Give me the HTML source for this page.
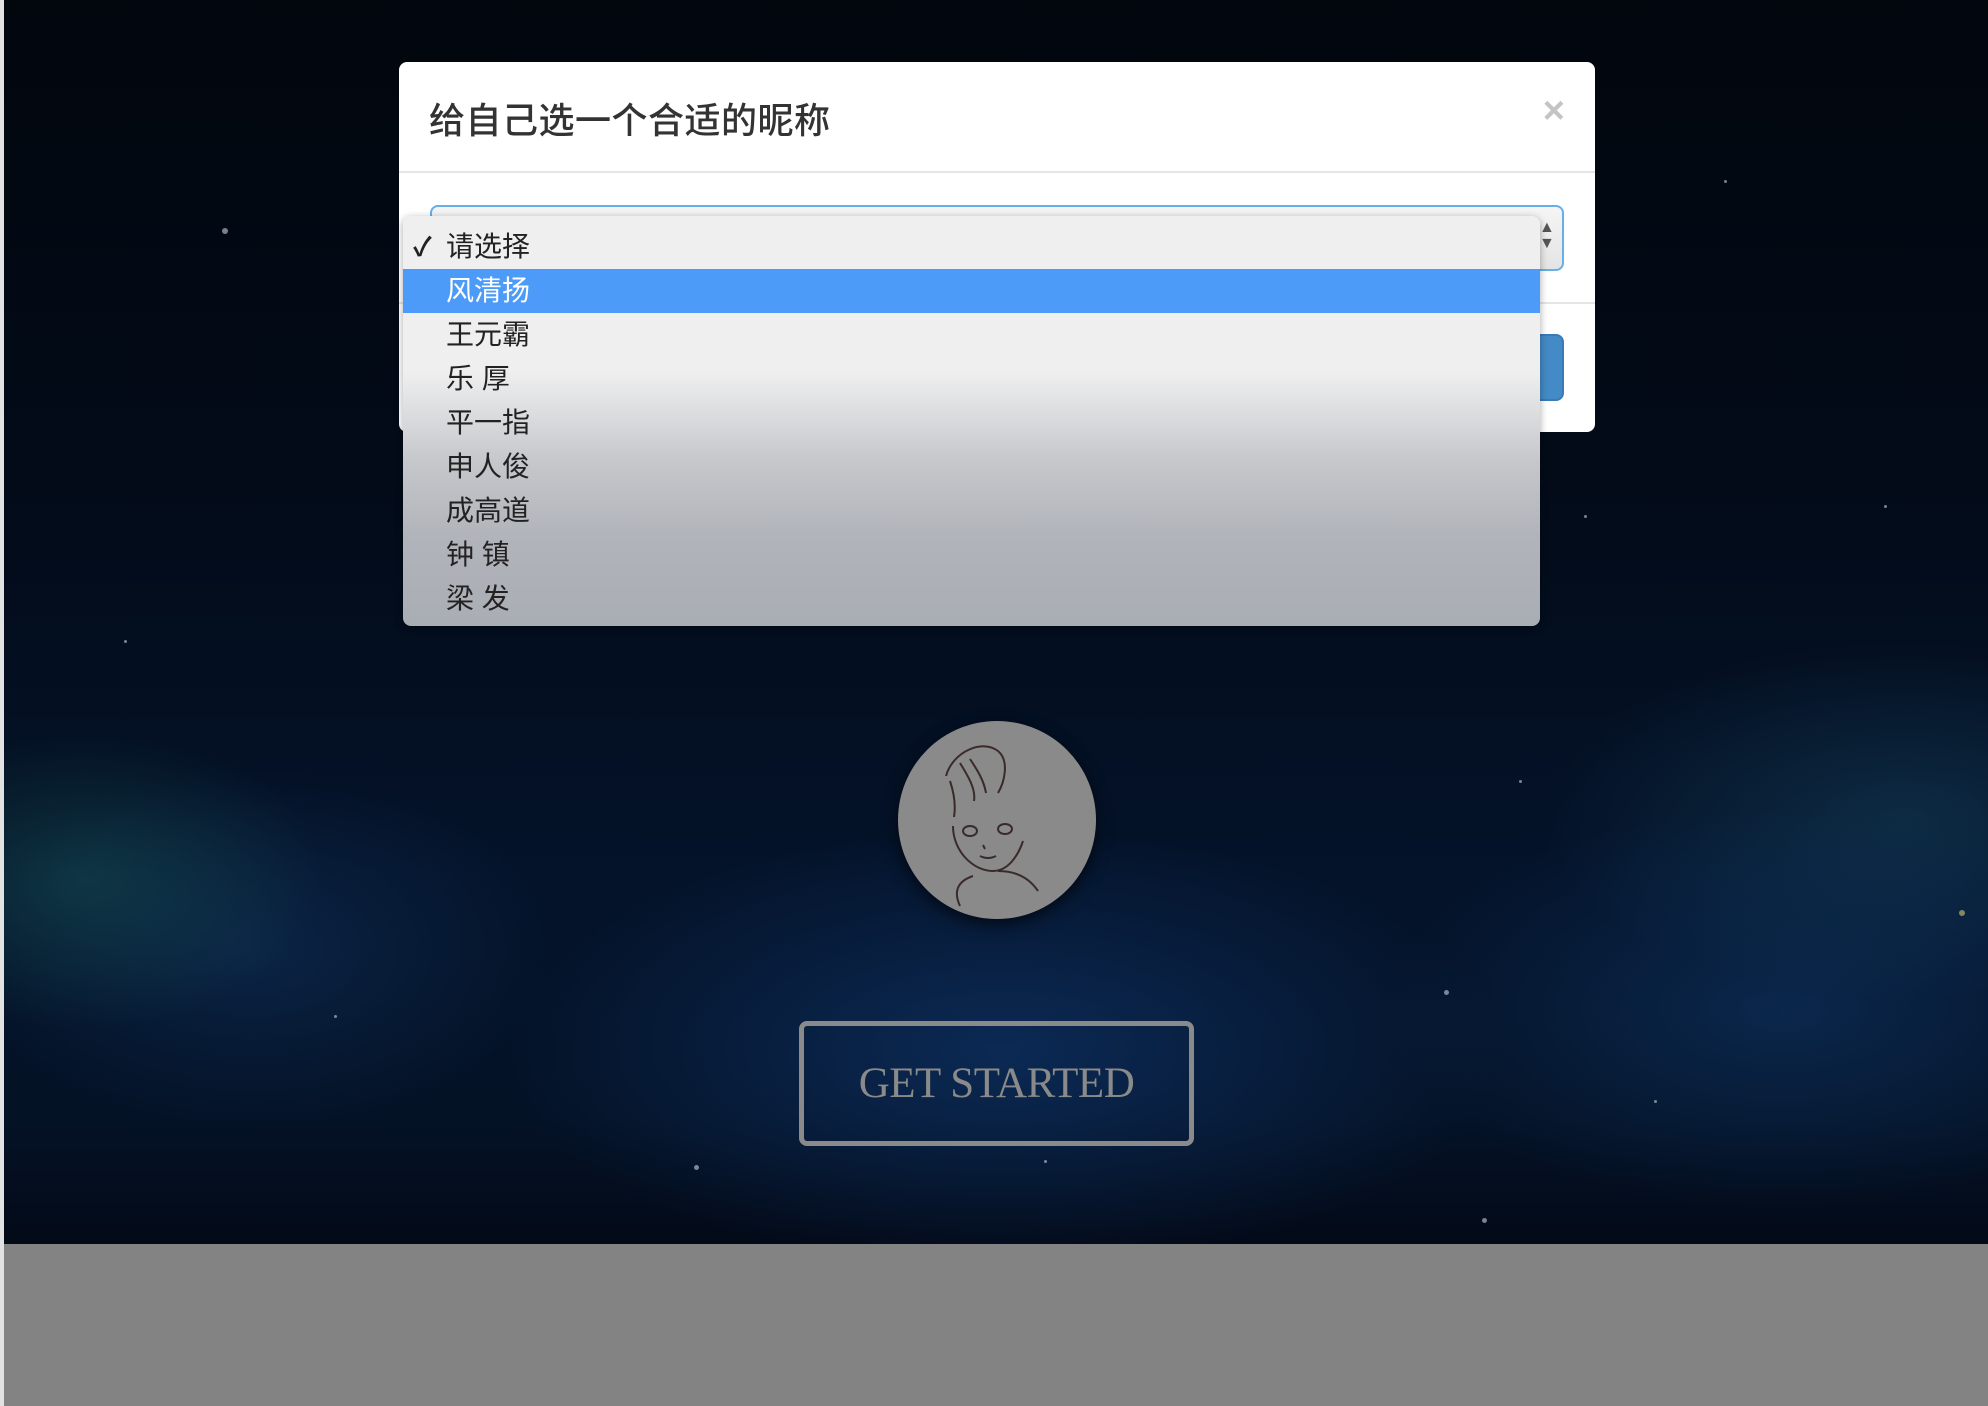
<!DOCTYPE html>
<html><head><meta charset="utf-8"><style>
*{margin:0;padding:0;box-sizing:border-box}
html,body{width:1988px;height:1406px;overflow:hidden}
body{position:relative;background:#838383;font-family:"Liberation Sans","Noto Sans CJK SC",sans-serif}
.strip{position:absolute;left:0;top:0;width:4px;height:1406px;background:#e2e2e2}
.sky{position:absolute;left:4px;top:0;width:1984px;height:1244px;overflow:hidden;
background:
radial-gradient(ellipse 240px 150px at 80px 880px,rgba(30,110,100,.35),transparent),
radial-gradient(ellipse 500px 220px at 1000px 1050px,rgba(20,70,140,.45),transparent),
radial-gradient(ellipse 400px 200px at 1780px 1010px,rgba(20,70,130,.4),transparent),
radial-gradient(ellipse 360px 180px at 1900px 820px,rgba(30,90,120,.35),transparent),
radial-gradient(ellipse 300px 180px at 250px 950px,rgba(20,60,110,.4),transparent),
linear-gradient(#02060d 0%,#030c1b 45%,#04132a 70%,#041226 90%,#030a18 100%);}
.star{position:absolute;width:3px;height:3px;border-radius:50%;background:rgba(200,210,230,.6)}
.modal{position:absolute;left:399px;top:62px;width:1196px;height:370px;background:#fff;border-radius:8px}
.title{position:absolute;left:30px;top:30px;font-size:36px;color:#333;font-weight:500;letter-spacing:0.5px}
.close{position:absolute;right:30px;top:28px;font-size:38px;color:#c4c4c4;font-weight:bold}
.hline{position:absolute;left:0;right:0;height:2px;background:#e5e5e5}
.sel{position:absolute;left:31px;top:143px;width:1134px;height:66px;border:2px solid #66afe9;border-radius:8px;background:linear-gradient(#f5f5f5,#e4e4e4)}
.arr{position:absolute;left:1140px;top:158px;font-size:16px;line-height:16px;color:#555}
.btn{position:absolute;left:1100px;top:272px;width:65px;height:67px;background:#438ac6;border-radius:8px;border:2px solid #3a7ab5}
.dd{position:absolute;left:403px;top:216px;width:1137px;height:410px;border-radius:8px;box-shadow:0 2px 8px rgba(0,0,0,.35);
background:linear-gradient(#efefef 0%,#efefef 38%,#dcdddf 48%,#c5c7cb 60%,#b1b4ba 78%,#a9adb4 100%);overflow:hidden}
.it{position:absolute;left:0;width:100%;height:44px;line-height:44px;padding-left:43px;font-size:28px;color:#222}
.hl{background:#4d9bf9;color:#fff}
.chk{position:absolute;left:10px;font-size:26px;font-weight:bold}
.av{position:absolute;left:898px;top:721px;width:198px;height:198px;border-radius:50%;background:#8a8a8a;box-shadow:0 6px 16px rgba(0,0,0,.6)}
.gs{position:absolute;left:799px;top:1021px;width:395px;height:125px;border:5px solid #8a8a8a;border-radius:8px;color:#8a8a8a;font-family:"Liberation Serif",serif;font-size:43px;letter-spacing:-0.5px;text-align:center;line-height:115px}
</style></head><body>
<div class="strip"></div>
<div class="sky">
<div class="star" style="left:218px;top:228px;width:6px;height:6px"></div>
<div class="star" style="left:1580px;top:515px"></div>
<div class="star" style="left:1440px;top:990px;width:5px;height:5px"></div>
<div class="star" style="left:330px;top:1015px"></div>
<div class="star" style="left:1040px;top:1160px"></div>
<div class="star" style="left:690px;top:1165px;width:5px;height:5px"></div>
<div class="star" style="left:1478px;top:1218px;width:5px;height:5px"></div>
<div class="star" style="left:1955px;top:910px;width:6px;height:6px;background:rgba(220,200,120,.6)"></div>
<div class="star" style="left:1515px;top:780px"></div>
<div class="star" style="left:1880px;top:505px"></div>
<div class="star" style="left:470px;top:470px"></div>
<div class="star" style="left:1720px;top:180px"></div>
<div class="star" style="left:120px;top:640px"></div>
<div class="star" style="left:1650px;top:1100px"></div>
</div>
<div class="av">
<svg width="198" height="198" viewBox="0 0 198 198" fill="none" stroke="#3a2a2a" stroke-width="2">
<path d="M48 55 C55 30 85 18 100 30 C112 40 106 62 100 72 M52 60 C56 72 58 84 56 96 M62 42 C70 55 78 68 76 80 M72 38 C80 50 86 60 88 72"/>
<ellipse cx="72" cy="110" rx="7" ry="5"/><ellipse cx="107" cy="108" rx="7" ry="5"/>
<path d="M85 124 l2 4 M82 135 q8 4 16 0 M55 105 C55 130 75 150 95 150 C110 150 120 135 125 120 M75 155 C60 160 55 170 62 185 M100 150 C115 150 130 155 140 170"/>
</svg></div>
<div class="gs">GET STARTED</div>
<div class="modal">
<div class="title">给自己选一个合适的昵称</div>
<div class="close">×</div>
<div class="hline" style="top:109px"></div>
<div class="sel"></div>
<div class="arr">▲<br>▼</div>
<div class="hline" style="top:240px"></div>
<div class="btn"></div>
</div>
<div class="dd">
<div class="it" style="top:9px"><span class="chk">✓</span>请选择</div>
<div class="it hl" style="top:53px">风清扬</div>
<div class="it" style="top:97px">王元霸</div>
<div class="it" style="top:141px">乐 厚</div>
<div class="it" style="top:185px">平一指</div>
<div class="it" style="top:229px">申人俊</div>
<div class="it" style="top:273px">成高道</div>
<div class="it" style="top:317px">钟 镇</div>
<div class="it" style="top:361px">梁 发</div>
</div>
</body></html>
